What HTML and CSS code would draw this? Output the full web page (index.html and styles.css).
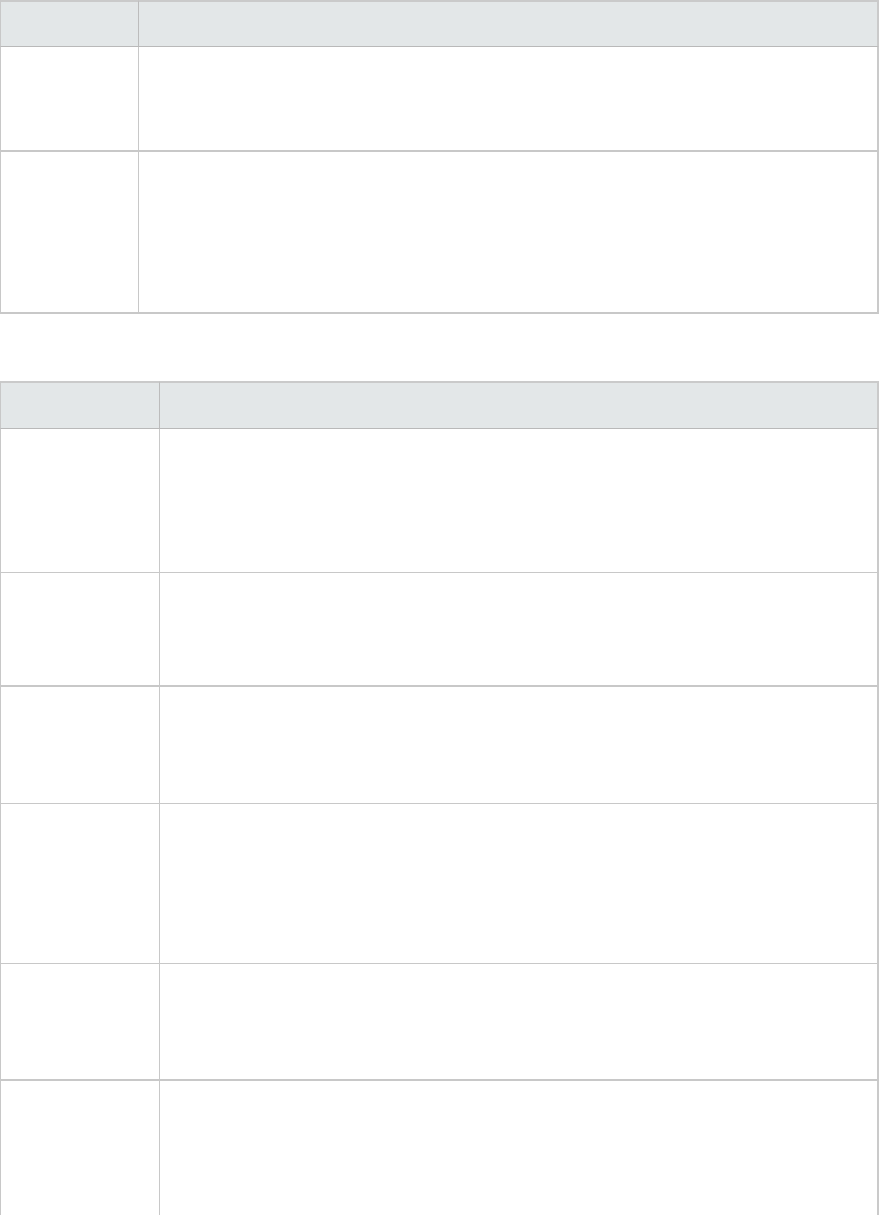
FILE: index.html
```html
<!DOCTYPE html>
<html lang="en">
<head>
    <meta charset="UTF-8">
    <meta name="viewport" content="width=device-width, initial-scale=1.0">
    <title>Tables</title>
    <link rel="stylesheet" href="styles.css">
</head>
<body>
    <table class="grid first">
        <thead>
            <tr>
                <th class="key"></th>
                <th></th>
            </tr>
        </thead>
        <tbody>
            <tr class="r105 heavy"><td></td><td></td></tr>
            <tr class="r162 heavy"><td></td><td></td></tr>
        </tbody>
    </table>

    <table class="grid second">
        <thead>
            <tr>
                <th class="key"></th>
                <th></th>
            </tr>
        </thead>
        <tbody>
            <tr class="r144"><td></td><td></td></tr>
            <tr class="r114 heavy"><td></td><td></td></tr>
            <tr class="r117"><td></td><td></td></tr>
            <tr class="r160"><td></td><td></td></tr>
            <tr class="r117b heavy"><td></td><td></td></tr>
            <tr class="r160"><td></td><td></td></tr>
        </tbody>
    </table>
</body>
</html>
```

FILE: styles.css
```css
body {
    margin: 0;
    padding: 0;
    background-color: #ffffff;
    color: #333333;
    font-family: "Liberation Sans", Arial, sans-serif;
    font-size: 13px;
}
.grid {
    width: 879px;
    border-collapse: separate;
    border-spacing: 0;
    table-layout: fixed;
}
.grid th,
.grid td {
    box-sizing: border-box;
    padding: 0;
    border-right: 1px solid #c8c8c8;
    border-bottom: 1px solid #c8c8c8;
}
.grid th {
    height: 47px;
    background-color: #e3e7e8;
    border-top: 2px solid #cacaca;
    border-right-color: #bcbcbc;
    border-bottom-color: #b9b9b9;
}
.grid th:first-child,
.grid td:first-child {
    border-left: 1px solid #c8c8c8;
}
.grid th:last-child,
.grid td:last-child {
    border-right: 2px solid #cacaca;
}
.grid .heavy td {
    border-bottom-width: 2px;
}
.first .key {
    width: 139px;
}
.second {
    margin-top: 67px;
}
.second th {
    height: 48px;
}
.second .key {
    width: 160px;
}
.r105 td { height: 105px; }
.r162 td { height: 162px; }
.r144 td { height: 144px; }
.r114 td { height: 114px; }
.r117 td { height: 117px; }
.r117b td { height: 117px; }
.r160 td { height: 160px; }
```
